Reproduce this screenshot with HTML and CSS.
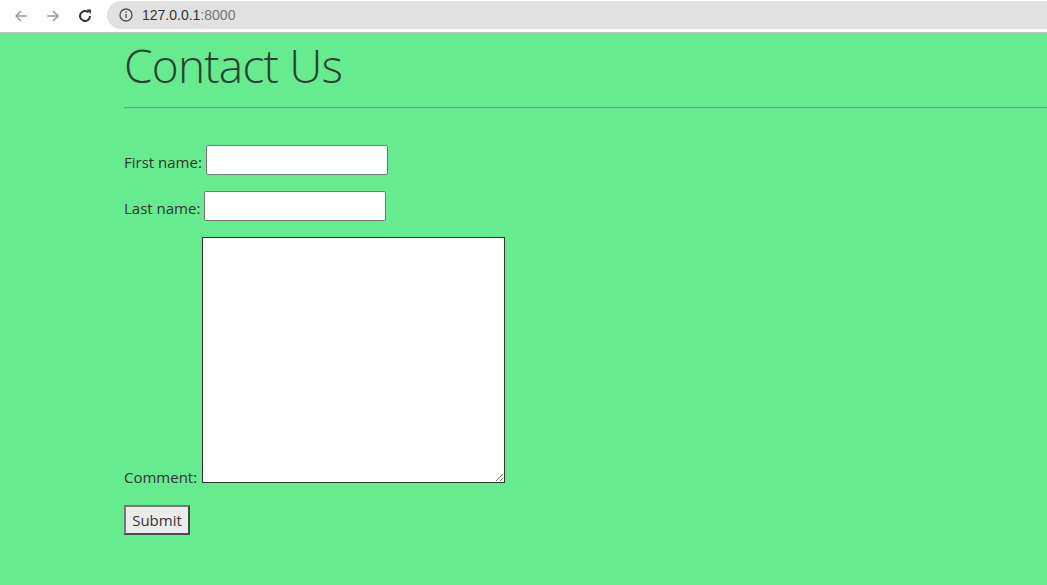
FILE: index.html
```html
<!DOCTYPE html>
<html>
<head>
<meta charset="utf-8">
<title>Contact Us</title>
<link rel="stylesheet" href="styles.css">
</head>
<body>
<div class="chrome">
  <div class="nav">
    <svg class="ico" width="16" height="16" viewBox="0 0 16 16"><path d="M14 8H3M8 3L3 8l5 5" fill="none" stroke="#9a9a9a" stroke-width="1.6"/></svg>
    <svg class="ico" width="16" height="16" viewBox="0 0 16 16"><path d="M2 8h11M8 3l5 5-5 5" fill="none" stroke="#9a9a9a" stroke-width="1.6"/></svg>
    <svg class="ico" width="16" height="16" viewBox="0 0 16 16"><path d="M13 8a5 5 0 1 1-1.5-3.6" fill="none" stroke="#333" stroke-width="2"/><path d="M9.5 1.5h4.5v4.5z" fill="#333"/></svg>
  </div>
  <div class="omnibox">
    <svg class="info" width="14" height="14" viewBox="0 0 14 14"><circle cx="7" cy="7" r="6" fill="none" stroke="#555" stroke-width="1.4"/><rect x="6.3" y="6" width="1.4" height="4" fill="#555"/><rect x="6.3" y="3.4" width="1.4" height="1.4" fill="#555"/></svg>
    <span class="url">127.0.0.1<span class="port">:8000</span></span>
  </div>
</div>
<div class="page">
  <h1 class="title">Contact Us</h1>
  <hr class="rule">
  <form class="form">
    <div class="row"><label>First name:</label><input type="text" class="field"></div>
    <div class="row"><label>Last name:</label><input type="text" class="field"></div>
    <div class="row row-comment"><label>Comment:</label><textarea class="area"></textarea></div>
    <div class="row"><button type="button" class="submit">Submit</button></div>
  </form>
</div>
</body>
</html>
```
FILE: styles.css
```css
html, body { margin: 0; padding: 0; }
body {
  background: #66eb8e;
  font-family: "Open Sans", "Noto Sans", sans-serif;
  color: #333;
  height: 585px;
  overflow: hidden;
}
.chrome {
  background: #fff;
  height: 32px;
  border-bottom: 1px solid #b9c9bd;
  display: flex;
  align-items: center;
}
.nav {
  display: flex;
  align-items: center;
  gap: 16px;
  padding-left: 13px;
  width: 94px;
}
.ico { display: block; }
.omnibox {
  flex: 1;
  height: 28px;
  margin-top: -2px;
  background: #e1e1e1;
  border-radius: 14px 0 0 14px;
  display: flex;
  align-items: center;
  padding-left: 12px;
  gap: 9px;
}
.url {
  font-family: "Liberation Sans", Arial, sans-serif;
  font-size: 14px;
  color: #333;
}
.port { color: #777; }
.page {
  padding-left: 124px;
}
.title {
  font-family: "Open Sans", sans-serif;
  font-weight: 300;
  font-size: 46px;
  margin: 0;
  padding-top: 1px;
  line-height: 62px;
  letter-spacing: -0.8px;
  color: #2f3f34;
}
.rule {
  margin: 11px 0 0 0;
  border: 0;
  border-top: 1px solid #55a971;
  border-bottom: 1px solid #72d893;
  height: 0;
}
.form {
  padding-top: 36px;
}
.row {
  display: flex;
  align-items: flex-end;
  margin-bottom: 16px;
  font-size: 15px;
}
.row label { margin-right: 4px; line-height: 18px; margin-bottom: 4px; }
.field {
  width: 182px;
  height: 30px;
  box-sizing: border-box;
  border: 1px solid #767676;
  border-radius: 2px;
  background: #fff;
  margin: 0;
  padding: 2px;
}
.area {
  width: 303px;
  height: 246px;
  box-sizing: border-box;
  border: 1px solid #333;
  background: #fff;
  margin: 0;
  resize: both;
}
.row-comment label { margin-bottom: -3px; margin-right: 5px; }
.row-comment { margin-bottom: 22px; }
.submit {
  font-family: "Open Sans", sans-serif;
  font-size: 15px;
  color: #333;
  width: 66px;
  height: 30px;
  padding: 0;
  background: #ececec;
  border: 2px solid #4a4a4a;
  border-top-color: #777;
  border-left-color: #777;
  margin: 0;
}
```
